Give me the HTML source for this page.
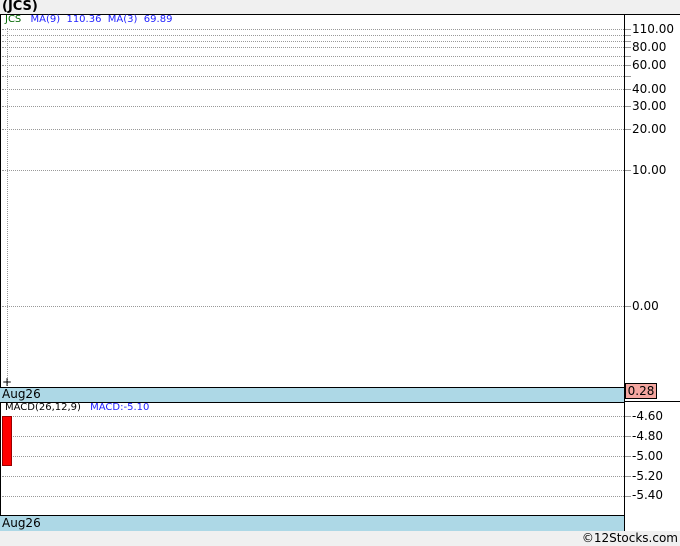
<!DOCTYPE html>
<html><head><style>
body{margin:0;width:680px;height:546px;background:#f0f0f0;position:relative;overflow:hidden;font-family:"DejaVu Sans","Liberation Sans",sans-serif;font-size:11px}
.a{position:absolute}
.g{position:absolute;left:2px;width:622px;border-top:1px dotted #999}
.g2{position:absolute;left:2px;width:622px;border-top:1px dotted #999}
.t{position:absolute;left:625px;width:6px;border-top:1px solid #999}
.l{position:absolute;left:632px;color:#000;font-size:12px}
</style></head><body>
<div class="a" style="left:2px;top:-1px;font-weight:bold;font-size:13px">(JCS)</div>
<div class="a" style="left:0;top:14px;width:680px;height:517px;background:#fff"></div>
<div class="a" style="left:0;top:14px;width:680px;height:1px;background:#000"></div>
<div class="a" style="left:0;top:14px;width:1px;height:517px;background:#000"></div>
<div class="a" style="left:624px;top:14px;width:1px;height:517px;background:#000"></div>
<div class="a" style="left:7px;top:28px;height:358px;border-left:1px dotted #999"></div>
<div class="g" style="top:29px"></div><div class="g" style="top:35px"></div><div class="g" style="top:41px"></div><div class="g" style="top:47px"></div><div class="g" style="top:56px"></div><div class="g" style="top:65px"></div><div class="g" style="top:76px"></div><div class="g" style="top:89px"></div><div class="g" style="top:106px"></div><div class="g" style="top:129px"></div><div class="g" style="top:170px"></div><div class="g" style="top:306px"></div>
<div class="t" style="top:29px"></div><div class="t" style="top:35px"></div><div class="t" style="top:41px"></div><div class="t" style="top:47px"></div><div class="t" style="top:56px"></div><div class="t" style="top:65px"></div><div class="t" style="top:76px"></div><div class="t" style="top:89px"></div><div class="t" style="top:106px"></div><div class="t" style="top:129px"></div><div class="t" style="top:170px"></div><div class="t" style="top:306px"></div>
<div class="l" style="top:22px">110.00</div><div class="l" style="top:40px">80.00</div><div class="l" style="top:58px">60.00</div><div class="l" style="top:82px">40.00</div><div class="l" style="top:99px">30.00</div><div class="l" style="top:122px">20.00</div><div class="l" style="top:163px">10.00</div><div class="l" style="top:299px">0.00</div>
<div class="a" style="left:5px;top:14px;font-size:10px;color:#060"><span>JCS</span> <span style="color:#22f;margin-left:6px">MA(9)&nbsp; 110.36&nbsp; MA(3)&nbsp; 69.89</span></div>
<div class="a" style="left:2px;top:375px;font-size:12px">+</div>
<div class="a" style="left:0;top:387px;width:624px;height:14px;background:#add8e6;border-top:1px solid #000;border-bottom:1px solid #000"></div>
<div class="a" style="left:2px;top:387px;font-size:12px">Aug26</div>
<div class="a" style="left:624px;top:401px;width:56px;height:1px;background:#000"></div>
<div class="a" style="left:625px;top:383px;width:30px;height:14px;background:#f4a6a0;border:1px solid #000;font-size:12px;text-align:center;line-height:14px">0.28</div>
<div class="a" style="left:5px;top:402px;font-size:10px">MACD(26,12,9) <span style="color:#22f;margin-left:6px">MACD:-5.10</span></div>
<div class="g2" style="top:416px"></div><div class="g2" style="top:436px"></div><div class="g2" style="top:456px"></div><div class="g2" style="top:476px"></div><div class="g2" style="top:496px"></div>
<div class="t" style="top:416px"></div><div class="t" style="top:436px"></div><div class="t" style="top:456px"></div><div class="t" style="top:476px"></div><div class="t" style="top:496px"></div>
<div class="l" style="top:409px">-4.60</div><div class="l" style="top:429px">-4.80</div><div class="l" style="top:449px">-5.00</div><div class="l" style="top:469px">-5.20</div><div class="l" style="top:488px">-5.40</div>
<div class="a" style="left:2px;top:416px;width:8px;height:48px;background:#f00;border:1px solid #900"></div>
<div class="a" style="left:0;top:515px;width:624px;height:15px;background:#add8e6;border-top:1px solid #000;border-bottom:1px solid #000"></div>
<div class="a" style="left:2px;top:516px;font-size:12px">Aug26</div>
<div class="a" style="left:0;top:531px;width:680px;height:15px;background:#f0f0f0"></div>
<div class="a" style="right:2px;top:531px;font-size:12px">©12Stocks.com</div>
</body></html>
